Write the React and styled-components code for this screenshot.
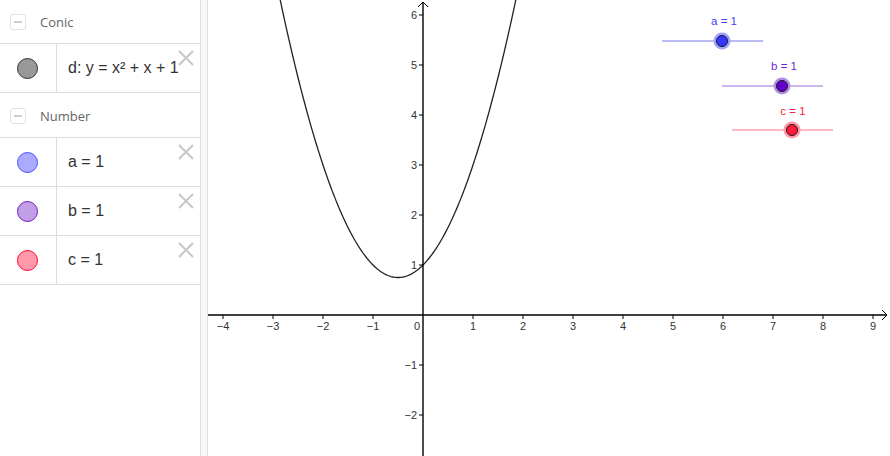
import styled, { createGlobalStyle } from "styled-components";

const GlobalStyle = createGlobalStyle`
  html, body {
    margin: 0;
    padding: 0;
    background: #ffffff;
    overflow: hidden;
  }
  #root {
    height: 456px;
  }
`;

const Page = styled.div`
  display: flex;
  width: 890px;
  height: 456px;
  background: #ffffff;
`;

const AlgebraPanel = styled.div`
  width: 200px;
  flex: none;
  display: flex;
  flex-direction: column;
`;

const GroupHeader = styled.div`
  box-sizing: border-box;
  height: ${(p) => p.$height}px;
  display: flex;
  align-items: center;
  gap: 14px;
  padding-left: 10px;
  padding-top: 1px;
  border-bottom: 1px solid #dddddd;
`;

const CollapseBox = styled.span`
  box-sizing: border-box;
  width: 16px;
  height: 16px;
  border: 1px solid #e2e2e2;
  border-radius: 3px;
  display: flex;
  align-items: center;
  justify-content: center;
  &::after {
    content: "";
    width: 8px;
    height: 2px;
    background: #cfcfcf;
  }
`;

const GroupTitle = styled.span`
  font-family: "Open Sans", "Noto Sans", sans-serif;
  font-size: 13px;
  color: #666666;
`;

const ItemRow = styled.div`
  position: relative;
  box-sizing: border-box;
  height: 49px;
  display: flex;
  border-bottom: 1px solid #dddddd;
`;

const MarbleCell = styled.div`
  width: 56px;
  flex: none;
  display: flex;
  align-items: center;
  justify-content: center;
  border-right: 1px solid #dddddd;
`;

const Marble = styled.span`
  box-sizing: border-box;
  width: 21px;
  height: 21px;
  margin-left: -2px;
  border-radius: 50%;
  background: ${(p) => p.$fill};
  border: 1.5px solid ${(p) => p.$stroke};
`;

const ItemText = styled.div`
  display: flex;
  align-items: center;
  padding-left: 11px;
  font-family: "Liberation Sans", Arial, sans-serif;
  font-size: 16px;
  color: #333333;
  white-space: nowrap;
`;

const CloseButton = styled.button`
  position: absolute;
  top: 6px;
  right: 6px;
  width: 16px;
  height: 16px;
  padding: 0;
  border: none;
  background: transparent;
  display: flex;
`;

const Splitter = styled.div`
  box-sizing: border-box;
  width: 8px;
  flex: none;
  background: #f8f8f8;
  border-left: 1px solid #e0e0e0;
  border-right: 1px solid #e0e0e0;
`;

const GraphicsView = styled.div`
  flex: 1;
  position: relative;
  overflow: hidden;
`;

const items = [
  { group: "Conic", height: 44, rows: [{ text: "d: y = x² + x + 1", fill: "#999999", stroke: "#333333" }] },
  {
    group: "Number",
    height: 45,
    rows: [
      { text: "a = 1", fill: "#aaaaff", stroke: "#4d4dff" },
      { text: "b = 1", fill: "#c29de8", stroke: "#6a1fc2" },
      { text: "c = 1", fill: "#ff99aa", stroke: "#ff0033" },
    ],
  },
];

function CloseIcon() {
  return (
    <svg width="16" height="16" viewBox="0 0 16 16">
      <path d="M1 1 L15 15 M15 1 L1 15" stroke="#c8c8c8" strokeWidth="2" fill="none" />
    </svg>
  );
}

// graphics view coordinates: view starts at page x = 208
const W = 682;
const H = 456;
const OX = 215;
const OY = 315;
const U = 50;

const px = (x) => OX + x * U;
const py = (y) => OY - y * U;

function parabolaPath() {
  const pts = [];
  for (let x = -3; x <= 2; x += 0.02) {
    const y = x * x + x + 1;
    pts.push(`${px(x).toFixed(2)},${py(y).toFixed(2)}`);
  }
  return "M" + pts.join(" L");
}

const sliders = [
  { label: "a = 1", x1: 454, x2: 555, y: 41, px: 514, lx: 516, ly: 25, text: "#4040ff", point: "#3535ff", halo: "#9f9fff", line: "#a6a6f2" },
  { label: "b = 1", x1: 514, x2: 615, y: 86, px: 574, lx: 576, ly: 70, text: "#6f1fd6", point: "#6600cc", halo: "#b08ee8", line: "#bb9be8" },
  { label: "c = 1", x1: 524, x2: 625, y: 130, px: 584, lx: 585, ly: 115, text: "#ff1744", point: "#ff1a3c", halo: "#ff99a8", line: "#ff9fb0" },
];

function Graph() {
  const xs = [-4, -3, -2, -1, 1, 2, 3, 4, 5, 6, 7, 8, 9];
  const ys = [6, 5, 4, 3, 2, 1, -1, -2];
  const labelFont = { fontFamily: "Liberation Sans, Arial, sans-serif", fontSize: 11, fill: "#333333" };
  return (
    <svg width={W} height={H} viewBox={`0 0 ${W} ${H}`}>
      <path d={parabolaPath()} stroke="#222222" strokeWidth="1.3" fill="none" />
      {/* axes */}
      <line x1="0" y1={OY} x2={W - 3} y2={OY} stroke="#000" strokeWidth="1.4" />
      <path d={`M${W - 8} ${OY - 5} L${W - 3} ${OY} L${W - 8} ${OY + 5}`} stroke="#000" strokeWidth="1" fill="none" />
      <line x1={OX} y1={H} x2={OX} y2="2" stroke="#000" strokeWidth="1.4" />
      <path d={`M${OX - 5} 7 L${OX} 2 L${OX + 5} 7`} stroke="#000" strokeWidth="1" fill="none" />
      {xs.map((v) => (
        <g key={"x" + v}>
          <line x1={px(v)} y1={OY} x2={px(v)} y2={OY + 4} stroke="#000" strokeWidth="1" />
          <text x={px(v)} y={OY + 15} textAnchor="middle" {...labelFont}>
            {v < 0 ? "\u2212" + -v : v}
          </text>
        </g>
      ))}
      <text x={OX - 6} y={OY + 15} textAnchor="middle" {...labelFont}>0</text>
      {ys.map((v) => (
        <g key={"y" + v}>
          <line x1={OX - 4} y1={py(v)} x2={OX} y2={py(v)} stroke="#000" strokeWidth="1" />
          <text x={OX - 6} y={py(v) + 4} textAnchor="end" {...labelFont}>
            {v < 0 ? "\u2212" + -v : v}
          </text>
        </g>
      ))}
      {/* sliders */}
      {sliders.map((s) => (
        <g key={s.label}>
          <line x1={s.x1} y1={s.y} x2={s.x2} y2={s.y} stroke={s.line} strokeWidth="1.3" />
          <circle cx={s.px} cy={s.y} r="8.5" fill={s.halo} />
          <circle cx={s.px} cy={s.y} r="5.5" fill={s.point} stroke="#1a1a1a" strokeWidth="1" />
          <text x={s.lx} y={s.ly} textAnchor="middle" fontFamily="Liberation Sans, Arial, sans-serif" fontSize="11.5" fill={s.text}>
            {s.label}
          </text>
        </g>
      ))}
    </svg>
  );
}

export default function App() {
  return (
    <>
      <GlobalStyle />
      <Page>
        <AlgebraPanel>
          {items.map((g) => (
            <div key={g.group}>
              <GroupHeader $height={g.height}>
                <CollapseBox />
                <GroupTitle>{g.group}</GroupTitle>
              </GroupHeader>
              {g.rows.map((r) => (
                <ItemRow key={r.text}>
                  <MarbleCell>
                    <Marble $fill={r.fill} $stroke={r.stroke} />
                  </MarbleCell>
                  <ItemText>{r.text}</ItemText>
                  <CloseButton aria-label="delete">
                    <CloseIcon />
                  </CloseButton>
                </ItemRow>
              ))}
            </div>
          ))}
        </AlgebraPanel>
        <Splitter />
        <GraphicsView>
          <Graph />
        </GraphicsView>
      </Page>
    </>
  );
}
